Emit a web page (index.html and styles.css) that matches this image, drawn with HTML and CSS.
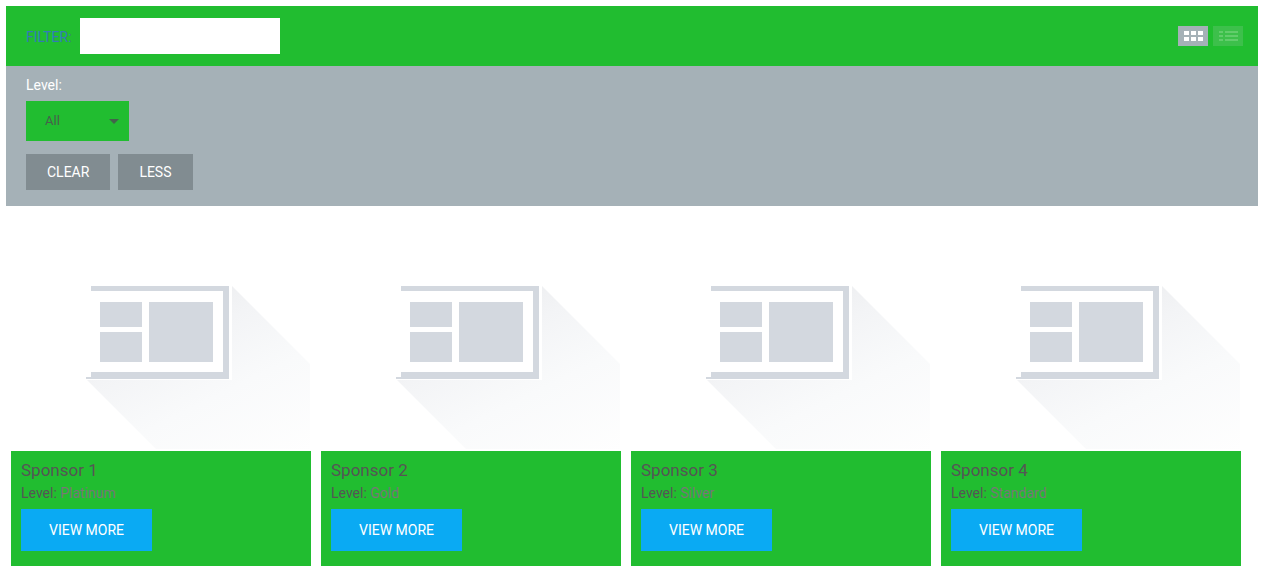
FILE: index.html
```html
<!DOCTYPE html>
<html lang="en">
<head>
<meta charset="utf-8">
<meta name="viewport" content="width=device-width, initial-scale=1">
<title>Sponsors</title>
<link rel="stylesheet" href="styles.css">
</head>
<body>
<svg class="defs" width="0" height="0" aria-hidden="true">
  <defs>
    <linearGradient id="shade" gradientUnits="userSpaceOnUse" x1="221" y1="75" x2="303" y2="239">
      <stop offset="0" stop-color="#eff0f2"/>
      <stop offset="0.15" stop-color="#f3f4f6"/>
      <stop offset="0.5" stop-color="#f9fafb"/>
      <stop offset="1" stop-color="#fefefe"/>
    </linearGradient>
    <symbol id="placeholder" viewBox="0 0 300 240">
      <path fill="url(#shade)" d="M221 75L299 153V238H145L76 169H221Z"/>
      <path fill="#d3d8df" d="M80 75H218V168H75V166H80V161H212V80H80Z"/>
      <path fill="#d3d8df" d="M89 91H131V116H89ZM89 121H131V151H89ZM138 91H202V151H138Z"/>
    </symbol>
  </defs>
</svg>
<header class="toolbar">
  <label class="filter-label" for="filter">FILTER:</label>
  <input class="filter-input" id="filter" type="text">
  <div class="views">
    <button class="view view-active" type="button" aria-label="Grid view">
      <svg viewBox="0 0 30 20" width="30" height="20"><path fill="#fff" d="M6 5h5v4H6zM13 5h5v4h-5zM20 5h5v4h-5zM6 11h5v4H6zM13 11h5v4h-5zM20 11h5v4h-5z"/></svg>
    </button>
    <button class="view" type="button" aria-label="List view">
      <svg viewBox="0 0 30 20" width="30" height="20"><path fill="#62cd6c" d="M6 5h4v2H6zM12 5h13v2H12zM6 9h4v2H6zM12 9h13v2H12zM6 13h4v2H6zM12 13h13v2H12z"/></svg>
    </button>
  </div>
</header>
<section class="filters">
  <label class="level-label" for="level">Level:</label>
  <div class="select-wrap">
    <select class="level-select" id="level"><option>All</option><option>Platinum</option><option>Gold</option><option>Silver</option><option>Standard</option></select>
    <svg class="caret" viewBox="0 0 10 5" width="10" height="5" aria-hidden="true"><path fill="#42644a" d="M0 0H10L5 5Z"/></svg>
  </div>
  <div class="actions">
    <button class="action" type="button">CLEAR</button>
    <button class="action" type="button">LESS</button>
  </div>
</section>
<main class="cards">
  <article class="card">
    <svg class="card-image" viewBox="0 0 300 240" aria-hidden="true"><use href="#placeholder"/></svg>
    <div class="card-body">
      <h2 class="card-title">Sponsor 1</h2>
      <p class="card-level">Level: <span class="level-value">Platinum</span></p>
      <button class="more" type="button">VIEW MORE</button>
    </div>
  </article>
  <article class="card">
    <svg class="card-image" viewBox="0 0 300 240" aria-hidden="true"><use href="#placeholder"/></svg>
    <div class="card-body">
      <h2 class="card-title">Sponsor 2</h2>
      <p class="card-level">Level: <span class="level-value">Gold</span></p>
      <button class="more" type="button">VIEW MORE</button>
    </div>
  </article>
  <article class="card">
    <svg class="card-image" viewBox="0 0 300 240" aria-hidden="true"><use href="#placeholder"/></svg>
    <div class="card-body">
      <h2 class="card-title">Sponsor 3</h2>
      <p class="card-level">Level: <span class="level-value">Silver</span></p>
      <button class="more" type="button">VIEW MORE</button>
    </div>
  </article>
  <article class="card">
    <svg class="card-image" viewBox="0 0 300 240" aria-hidden="true"><use href="#placeholder"/></svg>
    <div class="card-body">
      <h2 class="card-title">Sponsor 4</h2>
      <p class="card-level">Level: <span class="level-value">Standard</span></p>
      <button class="more" type="button">VIEW MORE</button>
    </div>
  </article>
</main>
</body>
</html>
```
FILE: styles.css
```css
* { box-sizing: border-box; }
body {
  margin: 6px;
  background: #fff;
  color: #555;
  font: 14px/20px Roboto, sans-serif;
}
button, input, select {
  margin: 0;
  border: 0;
  border-radius: 0;
  font: inherit;
}
.defs { position: absolute; }
.toolbar {
  display: flex;
  align-items: center;
  padding: 12px 15px 12px 20px;
  background: #21bd30;
}
.filter-label {
  margin-right: 8px;
  padding-top: 2px;
  color: #337ab7;
}
.filter-input {
  width: 200px;
  height: 36px;
  padding: 0 10px;
  background: #fff;
}
.views {
  display: flex;
  gap: 5px;
  margin-left: auto;
}
.view {
  display: flex;
  padding: 0;
  background: #3dc04b;
}
.view-active { background: #a5b1b7; }
.filters {
  padding: 9px 20px 16px;
  background: #a5b1b7;
}
.level-label {
  display: block;
  margin-bottom: 6px;
  color: #fff;
}
.select-wrap {
  position: relative;
  width: 103px;
  margin-bottom: 13px;
}
.level-select {
  display: block;
  width: 100%;
  height: 40px;
  padding: 0 30px 0 19px;
  appearance: none;
  background: #21bd30;
  color: #48604c;
  font-size: 13px;
}
.caret {
  position: absolute;
  top: 18px;
  right: 10px;
  pointer-events: none;
}
.actions {
  display: flex;
  gap: 8px;
}
.action {
  height: 36px;
  padding: 0 21px;
  background: #818c91;
  color: #fff;
}
.cards {
  display: grid;
  grid-template-columns: repeat(auto-fit, minmax(280px, 1fr));
  gap: 10px;
  padding: 5px 17px 7px 5px;
}
.card-image {
  display: block;
  width: 100%;
}
.card-body {
  padding: 8px 10px 15px;
  background: #21bd30;
}
.card-title {
  margin: 0 0 2px;
  font-size: 17px;
  font-weight: 400;
  line-height: 22px;
}
.card-level { margin: 0 0 6px; }
.level-value { color: #777; }
.more {
  display: block;
  height: 42px;
  padding: 0 28px;
  background: #0aaaf3;
  color: #fff;
}
```
